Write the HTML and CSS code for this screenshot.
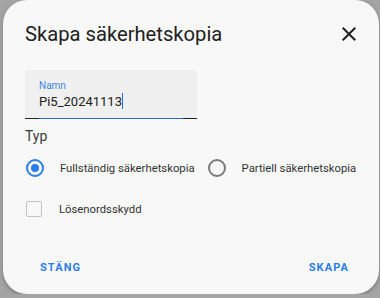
FILE: index.html
```html
<!DOCTYPE html>
<html lang="sv">
<head>
  <meta charset="UTF-8" />
  <title>Skapa säkerhetskopia</title>
  <link rel="stylesheet" href="styles.css">
</head>
<body>
  <div class="dialog">
    <div class="dialog-header">
      <h2>Skapa säkerhetskopia</h2>
      <button class="close-button" aria-label="Stäng">
        <svg width="24" height="24" viewBox="0 0 24 24"><path d="M19 6.41 17.59 5 12 10.59 6.41 5 5 6.41 10.59 12 5 17.59 6.41 19 12 13.41 17.59 19 19 17.59 13.41 12z" fill="#212121"/></svg>
      </button>
    </div>

    <div class="dialog-content">
      <div class="text-field">
        <label class="field-label">Namn</label>
        <div class="field-value">Pi5_20241113<span class="cursor"></span></div>
        <div class="field-line"></div>
      </div>

      <div class="type-label">Typ</div>
      <div class="radio-row">
        <label class="radio-option">
          <span class="radio checked"></span>
          <span>Fullständig säkerhetskopia</span>
        </label>
        <label class="radio-option">
          <span class="radio"></span>
          <span>Partiell säkerhetskopia</span>
        </label>
      </div>

      <label class="checkbox-option">
        <span class="checkbox"></span>
        <span>Lösenordsskydd</span>
      </label>
    </div>

    <div class="dialog-actions">
      <button class="text-button">Stäng</button>
      <button class="text-button">Skapa</button>
    </div>
  </div>
</body>
</html>
```

FILE: styles.css
```css
body {
  font-family: Roboto, "Noto Sans", sans-serif;
  background-color: #a4a4a4;
  margin: 0;
  padding: 0;
  color: #212121;
}

.dialog {
  background-color: #f8f8f8;
  margin-left: 3px;
  width: 376px;
  height: 294px;
  border-radius: 24px;
  box-shadow: 0 2px 4px rgba(0, 0, 0, 0.25);
  display: flex;
  flex-direction: column;
  box-sizing: border-box;
}

.dialog-header {
  display: flex;
  justify-content: space-between;
  align-items: center;
  padding: 20px 18px 0 22px;
}

h2 {
  margin: 0;
  font-size: 20.2px;
  font-weight: 400;
  line-height: 28px;
}

.close-button {
  background: none;
  border: none;
  padding: 0;
  width: 24px;
  height: 24px;
  cursor: pointer;
}

.close-button svg {
  display: block;
}

.dialog-content {
  padding: 0 22px;
  flex: 1;
}

.text-field {
  margin-top: 22px;
  width: 172px;
  height: 49px;
  background-color: #f0f0f0;
  border-radius: 4px 4px 0 0;
  position: relative;
  box-sizing: border-box;
  padding: 10px 14px 0;
}

.field-label {
  display: block;
  font-size: 10px;
  line-height: 12px;
  color: #3b87e3;
}

.field-value {
  font-size: 13px;
  line-height: 20px;
  color: #212121;
}

.cursor {
  display: inline-block;
  width: 1px;
  height: 16px;
  background-color: #1f6fd6;
  vertical-align: -3px;
}

.field-line {
  position: absolute;
  left: 0;
  right: 0;
  bottom: 0;
  height: 1px;
  background: linear-gradient(to right, #222 14px, #1f6fd6 14px, #1f6fd6 158px, #222 158px);
}

.type-label {
  margin-top: 8px;
  font-size: 14px;
  line-height: 18px;
  color: #3a3a3a;
}

.radio-row {
  display: flex;
  gap: 12px;
  margin-top: 14px;
}

.radio-option,
.checkbox-option {
  display: flex;
  align-items: center;
  font-size: 11.3px;
  color: #333;
  white-space: nowrap;
  flex-shrink: 0;
}

.radio {
  width: 18px;
  height: 18px;
  box-sizing: border-box;
  border: 2px solid #7a7a7a;
  border-radius: 50%;
  margin: 0 16px 0 1px;
  position: relative;
  flex-shrink: 0;
}

.radio.checked {
  border-color: #2b7de9;
}

.radio.checked::after {
  content: "";
  position: absolute;
  left: 3px;
  top: 3px;
  width: 8px;
  height: 8px;
  border-radius: 50%;
  background-color: #2b7de9;
}

.checkbox-option {
  margin-top: 24px;
}

.checkbox {
  width: 16px;
  height: 16px;
  box-sizing: border-box;
  border: 1px solid #c4c4c4;
  border-radius: 2px;
  margin: 0 17px 0 1px;
}

.dialog-actions {
  display: flex;
  justify-content: space-between;
  padding: 0 22px 16px 29px;
}

.text-button {
  background: none;
  border: none;
  font-family: Roboto, sans-serif;
  font-size: 11px;
  font-weight: 700;
  letter-spacing: 1.1px;
  text-transform: uppercase;
  color: #2b7de9;
  padding: 4px 8px;
  cursor: pointer;
}
```
